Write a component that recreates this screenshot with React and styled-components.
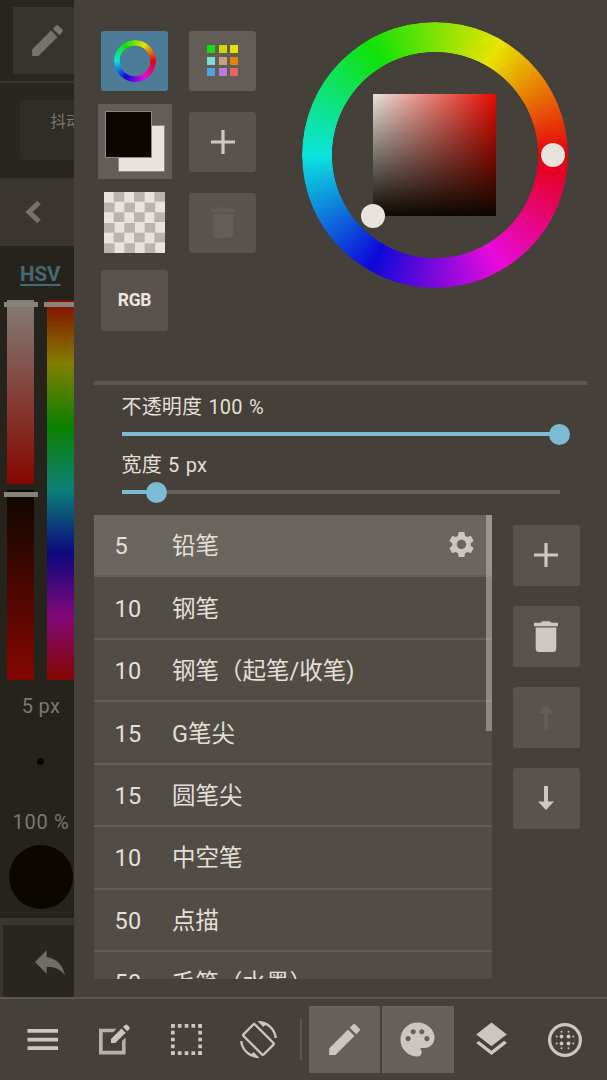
import React from "react";
import styled, { createGlobalStyle } from "styled-components";
import { MdEdit, MdSettings, MdPalette, MdLayers, MdScreenRotation, MdReply } from "react-icons/md";

const GlobalStyle = createGlobalStyle`
* {
  box-sizing: border-box;
}
body {
  margin: 0;
  background: #454039;
  color: #e4dfd8;
  font-family: Roboto, "Noto Sans CJK SC", sans-serif;
  font-weight: 400;
  overflow: hidden;
}
svg {
  display: block;
  flex: none;
}
`
const Screen = styled.div`
display: flex;
flex-direction: column;
width: 607px;
height: 1080px;
background: #454039;
overflow: hidden;
`
const Main = styled.div`
display: flex;
height: 997px;
`

// dimmed canvas side bar, cut by the panel
const Side = styled.div`
width: 74px;
height: 997px;
flex: none;
overflow: hidden;
background: #26221c;
color: #7c776f;
`
const SideTop = styled.div`
height: 83px;
padding: 7px 0 0 13px;
background: #29251f;
border-bottom: 2px solid #37332d;
`
const SideTool = styled.div`
display: flex;
align-items: center;
justify-content: center;
width: 68px;
height: 67px;
background: #37332d;
color: #77726b;
`
const SideOption = styled.div`
height: 95px;
padding: 17px 0 0 20px;
background: #29251f;
`
const Stabilizer = styled.div`
width: 100px;
height: 60px;
padding: 11px 0 0 30.5px;
border-radius: 3px;
background: #302c26;
font-size: 15.5px;
line-height: 23px;
white-space: nowrap;
`
const Back = styled.div`
display: flex;
align-items: center;
height: 68px;
padding-left: 25px;
background: #3a362f;
`
const ModeLink = styled.div`
height: 54px;
padding: 16px 0 0 20px;
color: #456874;
font-size: 20.5px;
line-height: 24px;
font-weight: 700;
text-decoration: underline;
text-decoration-thickness: 1.5px;
text-underline-offset: 2.5px;
`
const Bars = styled.div`
display: flex;
gap: 13px;
width: 100px;
height: 380px;
padding-left: 7px;
`
const BarColumn = styled.div`
display: flex;
flex-direction: column;
gap: 6.5px;
width: 27px;
`
const Bar = styled.div`
position: relative;
width: 27px;
height: ${p => p.$height}px;
background: ${p => p.$fill};
&:after {
  content: "";
  position: absolute;
  left: -3.5px;
  top: 2px;
  width: 34px;
  height: 5px;
  background: #87827a;
}
`
const SideValue = styled.div`
width: 82px;
height: ${p => p.$height}px;
padding-top: ${p => p.$top}px;
text-align: center;
font-size: 20px;
line-height: 24px;
letter-spacing: ${p => p.$spacing || 0.3}px;
`
const Dot = styled.div`
width: ${p => p.$size}px;
height: ${p => p.$size}px;
margin-left: ${p => 40.5 - p.$size / 2}px;
border-radius: 50%;
background: #0b0700;
`
const Undo = styled.div`
display: flex;
align-items: center;
justify-content: center;
width: 97px;
height: 79px;
margin-top: 9.5px;
padding-top: 1px;
border-top: 7px solid #3a362f;
border-left: 3px solid #3a362f;
background: #29251f;
color: #716c65;
`

const Panel = styled.div`
width: 533px;
height: 997px;
padding: 30.5px 20px 0;
`
const ColorArea = styled.div`
display: flex;
height: 350.5px;
`
const ToolColumn = styled.div`
display: flex;
flex-direction: column;
align-items: center;
width: 81px;
margin-right: 7px;
`
const Button = styled.button`
display: flex;
align-items: center;
justify-content: center;
width: 67.5px;
height: 60.5px;
flex: none;
margin: 0 0 20.5px;
padding: 0;
border: 0;
border-radius: 3px;
background: ${p => p.$bg || "#5a524c"};
color: ${p => (p.$off ? "#635d57" : "#cfc7c2")};
`
const RgbLabel = styled.span`
color: #ece4e0;
font: 700 17.5px Roboto, sans-serif;
line-height: 20px;
letter-spacing: -0.3px;
`
const Hue = styled.div`
width: ${p => p.$size}px;
height: ${p => p.$size}px;
border-radius: 50%;
background: conic-gradient(from 90deg, #e6000c, #e80add 60deg, #0e08da 120deg, #0ce4de 180deg, #10e208 240deg, #e8e400 300deg, #e6000c);
mask: radial-gradient(circle closest-side, transparent ${p => p.$inner}px, #000 ${p => p.$inner + 0.7}px);
`
const SwatchGrid = styled.div`
display: grid;
grid-template-columns: repeat(3, 8px);
gap: 3.4px;
`
const Swatch = styled.div`
height: 8px;
background: ${p => p.$color};
`
const CurrentColors = styled.div`
position: relative;
width: 74px;
height: 75px;
margin: -7.5px 0 13px;
flex: none;
background: #625d56;
`
const ColorSquare = styled.div`
position: absolute;
left: ${p => p.$at}px;
top: ${p => p.$at}px;
width: 47px;
height: 47px;
border: 1.5px solid #8e8981;
background: ${p => p.$color};
`
const Checker = styled.div`
width: 61px;
height: 61px;
flex: none;
margin-bottom: 17px;
background: conic-gradient(#b9b4ad 25%, #e8e3dc 0 50%, #b9b4ad 0 75%, #e8e3dc 0) 0 0 / 20.34px 20.34px;
`
const Wheel = styled.div`
position: relative;
width: 266px;
height: 266px;
margin: -8.5px 0 0 32px;
`
const Shade = styled.div`
position: absolute;
left: 71px;
top: 71.5px;
width: 122.5px;
height: 122.5px;
background: linear-gradient(to top, #0b0700, rgba(11, 7, 0, 0)), linear-gradient(to right, #e8e3dc, #e60b00);
`
const Knob = styled.div`
position: absolute;
left: ${p => p.$x - 12}px;
top: ${p => p.$y - 12}px;
width: 24px;
height: 24px;
border-radius: 50%;
background: #e8e3dc;
`
const Divider = styled.div`
height: 3.5px;
margin-right: 0.5px;
background: #5b564f;
`
const Sliders = styled.div`
height: 130.5px;
padding: 10.5px 27px 0 27.5px;
`
const Label = styled.div`
height: 24px;
font-size: 20px;
line-height: 24px;
letter-spacing: 0.15px;
word-spacing: 1.2px;
white-space: pre;
`
const Track = styled.div`
position: relative;
width: 438px;
height: 3.5px;
margin: 13px 0 17.5px;
background: #645f58;
`
const TrackFill = styled.div`
height: 100%;
background: #7bbbd3;
`
const Thumb = styled.div`
position: absolute;
top: -8.5px;
width: 21px;
height: 21px;
margin-left: -10.5px;
border-radius: 50%;
background: #7bbbd3;
`
const BrushArea = styled.div`
display: flex;
`
const BrushList = styled.div`
position: relative;
width: 398px;
height: 463.5px;
overflow: hidden;
background: #514c45;
`
const Scrollbar = styled.div`
position: absolute;
right: 0;
top: 0;
width: 6.5px;
height: 216px;
background: rgba(200, 195, 188, 0.5);
`
const Brush = styled.div`
display: flex;
align-items: center;
height: 62.45px;
padding: 2px 15px 0 20.5px;
border-bottom: 2px solid #625d56;
background: ${p => (p.$active ? "#6a655e" : "none")};
font-size: 23.5px;
line-height: 34px;
white-space: nowrap;
svg {
  margin-top: -3px;
}
`
const Size = styled.div`
width: 57.5px;
letter-spacing: 0.3px;
`
const Name = styled.div`
flex: 1;
`
const Actions = styled.div`
padding: 10px 0 0 20.5px;
`

const Toolbar = styled.div`
display: flex;
align-items: center;
height: 83px;
padding: 0 0 0 6px;
border-top: 2px solid #5d5750;
color: #cbc6bf;
`
const Tool = styled.div`
display: flex;
align-items: center;
justify-content: center;
width: ${p => p.$width || 72}px;
height: 67px;
margin-right: ${p => (p.$width ? 2 : 0)}px;
background: ${p => (p.$active ? "#65605a" : "none")};
`
const Separator = styled.div`
width: 1.7px;
height: 41px;
margin: 0 7px 0 6px;
background: #5d5750;
`

const Plus = () => (
  <svg width="24" height="24" viewBox="0 0 24 24">
    <path d="M10.4 0h3.2v10.4H24v3.2H13.6V24h-3.2V13.6H0v-3.2h10.4z" fill="currentColor" />
  </svg>
)
const Trash = () => (
  <svg width="24" height="31" viewBox="0 0 24 31">
    <path d="M0 1.7h6.5L8.3.2h7.4l1.8 1.5H24v3.6H0zM1.7 6.6h20.6v20.9a3.5 3.5 0 0 1-3.5 3.5H5.2a3.5 3.5 0 0 1-3.5-3.5z" fill="currentColor" />
  </svg>
)
const Arrow = ({ up }) => (
  <svg width="16" height="24" viewBox="0 0 16 24">
    <path d="M6 0h4v15.5h6L8 24l-8-8.5h6z" fill="currentColor" transform={up ? "rotate(180 8 12)" : undefined} />
  </svg>
)
const Menu = () => (
  <svg width="31" height="22" viewBox="0 0 31 22">
    <path d="M.5 0H31v3.8H.5zM.5 8.8H31v3.8H.5zM.5 17.3H31v3.8H.5z" fill="currentColor" />
  </svg>
)
const Compose = () => (
  <svg width="31" height="31" viewBox="0 0 31 31">
    <path d="M17.5 4.7 14 8.2H3.7v18.6H23V17l3.6-3.6v17.2H0V4.7z" fill="currentColor" fillRule="evenodd" opacity=".85" />
    <path d="m12 15 10.5-10.5 4.2 4.2L16.2 19.1H12zM24 3l2-2q1.2-1 2.4 0l1.9 1.9q1 1.2 0 2.4l-2 2z" fill="currentColor" />
  </svg>
)
const Marquee = () => (
  <svg width="31" height="31" viewBox="0 0 31 31" fill="none" stroke="currentColor" strokeWidth="3.7">
    <path d="M0 1.85h31M0 29.15h31" strokeDasharray="3.7 3.125" />
    <path d="M1.85 0v31M29.15 0v31" strokeDasharray="3.7 3.125" />
  </svg>
)
const tonePoints = [
  [13.5, 13.5, 1.9], [20.5, 13.5, 1.9], [13.5, 20.5, 1.9], [20.5, 20.5, 1.9],
  [13.5, 8.8, 1], [20.5, 8.8, 1], [13.5, 25.3, 1], [20.5, 25.3, 1],
  [8.7, 13.5, 1], [25.3, 13.5, 1], [8.7, 20.5, 1], [25.3, 20.5, 1],
]
const Tone = () => (
  <svg width="34" height="34" viewBox="0 0 34 34">
    <circle cx="17" cy="17" r="15.4" fill="none" stroke="currentColor" strokeWidth="3.2" />
    {tonePoints.map(([x, y, r]) => <circle key={`${x}-${y}`} cx={x} cy={y} r={r} fill="currentColor" />)}
  </svg>
)

const palette = ["#10df0c", "#c8dc00", "#e6e000", "#7cdfd5", "#cba07c", "#e68400", "#54a2dd", "#bb7bdd", "#e86464"]

const brushes = [
  { size: 5, name: "铅笔" },
  { size: 10, name: "钢笔" },
  { size: 10, name: "钢笔（起笔/收笔)" },
  { size: 15, name: "G笔尖" },
  { size: 15, name: "圆笔尖" },
  { size: 10, name: "中空笔" },
  { size: 50, name: "点描" },
  { size: 50, name: "毛笔（水墨）" },
]

const Slider = ({ label, value }) => (
  <>
    <Label>{label}</Label>
    <Track>
      <TrackFill style={{ width: `${value}%` }} />
      <Thumb style={{ left: `${value}%` }} />
    </Track>
  </>
)

const Sidebar = () => (
  <Side>
    <SideTop>
      <SideTool><MdEdit size={41} /></SideTool>
    </SideTop>
    <SideOption>
      <Stabilizer>抖动</Stabilizer>
    </SideOption>
    <Back>
      <svg width="17" height="24" viewBox="0 0 17 24">
        <path d="M14 2.5 4 12l10 9.5" fill="none" stroke="#77726b" strokeWidth="5" />
      </svg>
    </Back>
    <ModeLink>HSV</ModeLink>
    <Bars>
      <BarColumn>
        <Bar $height={183.5} $fill="linear-gradient(#827d75, #850700)" />
        <Bar $height={190} $fill="linear-gradient(#0b0700, #850700)" />
      </BarColumn>
      <Bar $height={380} $fill="linear-gradient(#850a00, #827e00, #0c8000, #0c8078, #0c087c, #820878, #850700)" />
    </Bars>
    <SideValue $height={77.5} $top={14}>5 px</SideValue>
    <Dot $size={7} />
    <SideValue $height={80} $top={45} $spacing={0.7}>100 %</SideValue>
    <Dot $size={64} />
    <Undo><MdReply size={40} /></Undo>
  </Side>
)

const App = () => {
  return (
    <>
      <GlobalStyle />
      <Screen>
        <Main>
          <Sidebar />
          <Panel>
            <ColorArea>
              <ToolColumn>
                <Button $bg="#4d7c99"><Hue $size={42} $inner={15} /></Button>
                <CurrentColors>
                  <ColorSquare $at={20.5} $color="#e8e3dc" />
                  <ColorSquare $at={7} $color="#0b0700" />
                </CurrentColors>
                <Checker />
                <Button><RgbLabel>RGB</RgbLabel></Button>
              </ToolColumn>
              <ToolColumn>
                <Button $bg="#625d56">
                  <SwatchGrid>
                    {palette.map(color => <Swatch key={color} $color={color} />)}
                  </SwatchGrid>
                </Button>
                <Button><Plus /></Button>
                <Button $off><Trash /></Button>
              </ToolColumn>
              <Wheel>
                <Hue $size={266} $inner={102.7} />
                <Shade />
                <Knob $x={251} $y={133} />
                <Knob $x={71.3} $y={194} />
              </Wheel>
            </ColorArea>
            <Divider />
            <Sliders>
              <Slider label="不透明度 100 %" value={100} />
              <Slider label="宽度 5 px" value={8} />
            </Sliders>
            <BrushArea>
              <BrushList>
                {brushes.map((brush, i) => (
                  <Brush key={brush.size + brush.name} $active={i === 0}>
                    <Size>{brush.size}</Size>
                    <Name>{brush.name}</Name>
                    {i === 0 && <MdSettings size={31} color="#cbc6bf" />}
                  </Brush>
                ))}
                <Scrollbar />
              </BrushList>
              <Actions>
                <Button><Plus /></Button>
                <Button><Trash /></Button>
                <Button $off><Arrow up /></Button>
                <Button><Arrow /></Button>
              </Actions>
            </BrushArea>
          </Panel>
        </Main>
        <Toolbar>
          <Tool><Menu /></Tool>
          <Tool><Compose /></Tool>
          <Tool><Marquee /></Tool>
          <Tool><MdScreenRotation size={37} /></Tool>
          <Separator />
          <Tool $width={71.5} $active><MdEdit size={41} /></Tool>
          <Tool $width={71.5} $active><MdPalette size={41} /></Tool>
          <Tool $width={71.5}><MdLayers size={41} /></Tool>
          <Tool $width={71.5}><Tone /></Tool>
        </Toolbar>
      </Screen>
    </>
  );
}

export default App;
